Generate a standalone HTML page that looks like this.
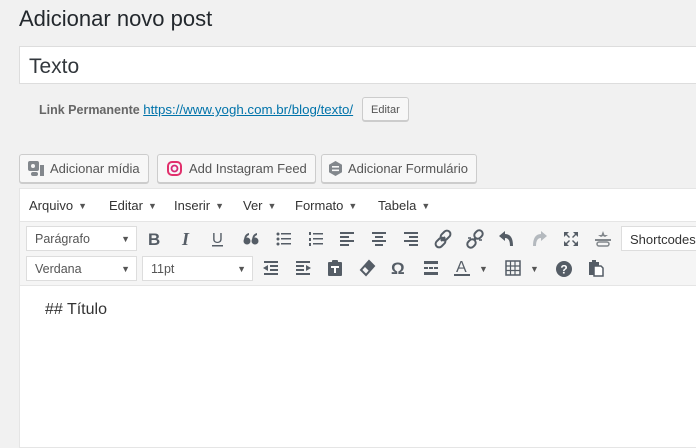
<!DOCTYPE html>
<html><head><meta charset="utf-8"><style>
*{box-sizing:border-box;margin:0;padding:0}
body{width:696px;height:439px;background:#f1f1f1;font-family:"Liberation Sans",sans-serif;color:#23282d;position:relative;overflow:hidden}
.a{position:absolute}
h1{position:absolute;left:19px;top:6px;font-size:22px;font-weight:400;color:#23282d}
.title{left:19px;top:46px;width:690px;height:38px;background:#fff;border:1px solid #ddd;font-size:21px;padding:8px 9px;color:#32373c}
.perm{left:39px;top:102px;font-size:12.5px;color:#666}
.perm a{color:#0073aa;text-decoration:underline;font-size:13.3px}
.btn{position:absolute;background:#f7f7f7;border:1px solid #ccc;border-radius:3px;box-shadow:0 1px 0 #ccc;font-size:13px;color:#555;height:29px;line-height:27px;padding:0 8px}
.ed{left:19px;top:188px;width:690px;height:260px;background:#fff;border:1px solid #e5e5e5}
.menu{left:20px;top:189px;width:680px;height:33px;background:#fff;border-bottom:1px solid #e5e5e5;font-size:13px;color:#333}
.menu span{position:absolute;top:9px}
.menu i{font-style:normal;font-size:9px;color:#555;margin-left:5px;vertical-align:1px}
.tb{left:20px;top:222px;width:680px;height:64px;background:#f5f5f5;border-bottom:1px solid #e5e5e5}
.sel{position:absolute;background:#fff;border:1px solid #ddd;height:25px;font-size:12.5px;color:#555;padding:5px 8px}
.sel:after{content:"▼";position:absolute;right:6px;top:7px;font-size:9px;color:#555}
svg.i{position:absolute;width:20px;height:20px}
.i *{fill:#555d66}
</style></head><body>
<h1>Adicionar novo post</h1>
<div class="a title">Texto</div>
<div class="a perm"><b>Link Permanente</b> <a>https://www.yogh.com.br/blog/texto/</a></div>
<div class="btn" style="left:362px;top:97px;height:24px;line-height:24px;font-size:11px;padding:0 8px">Editar</div>

<div class="btn" style="left:19px;top:154px;padding-left:30px">Adicionar mídia
<svg class="a" style="left:8px;top:6px" width="18" height="16"><rect x="0" y="0" width="11" height="10" rx="2" fill="#82878c"/><circle cx="5" cy="5" r="2" fill="#f7f7f7"/><rect x="12" y="4" width="4" height="11" fill="#82878c"/><rect x="3" y="11" width="7" height="4" rx="2" fill="#82878c"/></svg></div>
<div class="btn" style="left:157px;top:154px;padding-left:31px">Add Instagram Feed
<svg class="a" style="left:9px;top:6px" width="15" height="15"><rect x="1" y="1" width="13" height="13" rx="4" fill="none" stroke="#e1306c" stroke-width="2"/><circle cx="7.5" cy="7.5" r="3" fill="none" stroke="#d62976" stroke-width="1.8"/></svg></div>
<div class="btn" style="left:321px;top:154px;padding-left:26px">Adicionar Formulário
<svg class="a" style="left:6px;top:6px" width="15" height="15"><polygon points="7.5,0 14,3.7 14,11.3 7.5,15 1,11.3 1,3.7" fill="#82878c"/><rect x="4" y="5" width="7" height="1.6" fill="#f7f7f7"/><rect x="4" y="8.5" width="7" height="1.6" fill="#f7f7f7"/></svg></div>

<div class="a ed"></div>
<div class="a menu">
<span style="left:9px">Arquivo<i>▼</i></span><span style="left:89px">Editar<i>▼</i></span><span style="left:154px">Inserir<i>▼</i></span><span style="left:223px">Ver<i>▼</i></span><span style="left:275px">Formato<i>▼</i></span><span style="left:358px">Tabela<i>▼</i></span>
</div>
<div class="a tb">
<div class="sel" style="left:6px;top:4px;width:111px">Parágrafo</div>
<div class="sel" style="left:6px;top:34px;width:111px">Verdana</div>
<div class="sel" style="left:122px;top:34px;width:111px">11pt</div>
<div class="sel" style="left:601px;top:4px;width:100px;color:#333;font-size:13px">Shortcodes</div>

<svg class="i" style="left:125px;top:7px"><text x="3" y="16" font-size="17" font-weight="700" font-family="Liberation Sans" style="fill:#555d66">B</text></svg>
<svg class="i" style="left:157px;top:7px"><text x="5" y="16" font-size="18" font-style="italic" font-weight="700" font-family="Liberation Serif" style="fill:#555d66">I</text></svg>
<svg class="i" style="left:188px;top:7px"><text x="4" y="14" font-size="15" font-family="Liberation Sans" style="fill:#555d66">U</text><rect x="4" y="16" width="11" height="1.5"/></svg>
<svg class="i" style="left:221px;top:7px"><circle cx="6" cy="12" r="3.5"/><circle cx="14" cy="12" r="3.5"/><path d="M3 12 Q3 5 8 4 L8 6 Q5 7 5 11Z M11 12 Q11 5 16 4 L16 6 Q13 7 13 11Z"/></svg>
<svg class="i" style="left:254px;top:7px"><circle cx="4" cy="5" r="1.5"/><circle cx="4" cy="10" r="1.5"/><circle cx="4" cy="15" r="1.5"/><rect x="7" y="4" width="10" height="1.5"/><rect x="7" y="9" width="10" height="1.5"/><rect x="7" y="14" width="10" height="1.5"/></svg>
<svg class="i" style="left:286px;top:7px"><rect x="3" y="3" width="2" height="3"/><rect x="3" y="9" width="2" height="3"/><rect x="3" y="14" width="2" height="3"/><rect x="7" y="4" width="10" height="1.5"/><rect x="7" y="9" width="10" height="1.5"/><rect x="7" y="14" width="10" height="1.5"/></svg>
<svg class="i" style="left:317px;top:7px"><rect x="3" y="3" width="14" height="2"/><rect x="3" y="7" width="9" height="2"/><rect x="3" y="11" width="14" height="2"/><rect x="3" y="15" width="9" height="2"/></svg>
<svg class="i" style="left:349px;top:7px"><rect x="3" y="3" width="14" height="2"/><rect x="6" y="7" width="8" height="2"/><rect x="3" y="11" width="14" height="2"/><rect x="6" y="15" width="8" height="2"/></svg>
<svg class="i" style="left:381px;top:7px"><rect x="3" y="3" width="14" height="2"/><rect x="8" y="7" width="9" height="2"/><rect x="3" y="11" width="14" height="2"/><rect x="8" y="15" width="9" height="2"/></svg>
<svg class="i" style="left:413px;top:7px"><path d="M8 12 L12 8" stroke="#555d66" stroke-width="2"/><rect x="9" y="1" width="7" height="11" rx="3.5" transform="rotate(45 12.5 6.5)" style="fill:none;stroke:#555d66;stroke-width:2"/><rect x="4" y="8" width="7" height="11" rx="3.5" transform="rotate(45 7.5 13.5)" style="fill:none;stroke:#555d66;stroke-width:2"/></svg>
<svg class="i" style="left:445px;top:7px"><rect x="10" y="1" width="7" height="9" rx="3.5" transform="rotate(45 13.5 5.5)" style="fill:none;stroke:#555d66;stroke-width:2"/><rect x="3" y="10" width="7" height="9" rx="3.5" transform="rotate(45 6.5 14.5)" style="fill:none;stroke:#555d66;stroke-width:2"/><path d="M9 9 L11 11 M3 9 L6 9 M14 11 L17 11" stroke="#555d66" stroke-width="1.5"/></svg>
<svg class="i" style="left:477px;top:7px"><path d="M2 7 L8 2 L8 5 Q16 5 16 17 L13 17 Q13 9 8 9 L8 12Z"/></svg>
<svg class="i" style="left:509px;top:7px"><path d="M18 7 L12 2 L12 5 Q4 5 4 17 L7 17 Q7 9 12 9 L12 12Z" style="fill:#b4b9be"/></svg>
<svg class="i" style="left:541px;top:7px"><path d="M3 3 L8 3 L6 5 L9 8 L8 9 L5 6 L3 8Z M17 3 L17 8 L15 6 L12 9 L11 8 L14 5 L12 3Z M3 17 L3 12 L5 14 L8 11 L9 12 L6 15 L8 17Z M17 17 L12 17 L14 15 L11 12 L12 11 L15 14 L17 12Z"/></svg>
<svg class="i" style="left:573px;top:7px"><path d="M10 2 L11.5 6 L15 6 L12 8 L10 7 L8 8 L5 6 L8.5 6Z" style="fill:#82878c"/><rect x="2" y="10" width="16" height="2" style="fill:#82878c"/><rect x="4" y="13" width="12" height="4" rx="2" style="fill:none;stroke:#82878c;stroke-width:1.5"/></svg>

<svg class="i" style="left:241px;top:36px"><rect x="3" y="3" width="14" height="2"/><rect x="9" y="7" width="8" height="2"/><rect x="9" y="11" width="8" height="2"/><rect x="3" y="15" width="14" height="2"/><path d="M2 10 L7 7 L7 13Z"/></svg>
<svg class="i" style="left:273px;top:36px"><rect x="3" y="3" width="14" height="2"/><rect x="3" y="7" width="8" height="2"/><rect x="3" y="11" width="8" height="2"/><rect x="3" y="15" width="14" height="2"/><path d="M18 10 L13 7 L13 13Z"/></svg>
<svg class="i" style="left:305px;top:36px"><rect x="3" y="4" width="14" height="14" rx="1"/><rect x="7" y="2" width="6" height="4" rx="1"/><rect x="6" y="8" width="8" height="2" style="fill:#fff"/><rect x="9" y="8" width="2" height="7" style="fill:#fff"/></svg>
<svg class="i" style="left:337px;top:36px"><path d="M12 3 L17 8 L9 17 L4 12Z" style="fill:none;stroke:#555d66;stroke-width:2"/><path d="M12 3 L17 8 L12 13 L7 8Z"/></svg>
<svg class="i" style="left:369px;top:36px"><text x="2" y="16" font-size="17" font-weight="700" font-family="Liberation Sans" style="fill:#555d66">Ω</text></svg>
<svg class="i" style="left:401px;top:36px"><rect x="3" y="3" width="14" height="3"/><rect x="3" y="9" width="4" height="2"/><rect x="8" y="9" width="4" height="2"/><rect x="13" y="9" width="4" height="2"/><rect x="3" y="14" width="14" height="3"/></svg>
<svg class="i" style="left:432px;top:36px"><text x="4" y="14" font-size="16" font-family="Liberation Sans" style="fill:#555d66">A</text><rect x="2" y="16" width="16" height="2"/></svg>
<div class="a" style="left:459px;top:42px;font-size:9px;color:#555">▼</div>
<svg class="i" style="left:483px;top:36px"><rect x="3" y="3" width="14" height="14" style="fill:none;stroke:#555d66;stroke-width:1.5"/><path d="M3 8 H17 M3 12.5 H17 M7.5 3 V17 M12 3 V17" stroke="#555d66" stroke-width="1.2"/></svg>
<div class="a" style="left:510px;top:42px;font-size:9px;color:#555">▼</div>
<svg class="i" style="left:534px;top:37px"><circle cx="10" cy="10" r="8"/><text x="10" y="14.5" font-size="12" font-weight="700" text-anchor="middle" font-family="Liberation Sans" style="fill:#fff">?</text></svg>
<svg class="i" style="left:566px;top:36px"><rect x="3" y="4" width="10" height="13"/><rect x="6" y="2" width="4" height="4"/><path d="M8 8 H15 L17 10 V18 H8Z" style="fill:#fff;stroke:#555d66;stroke-width:1.5"/></svg>
</div>
<div class="a" style="left:45px;top:301px;font-size:16px;color:#333">## Título</div>
</body></html>
